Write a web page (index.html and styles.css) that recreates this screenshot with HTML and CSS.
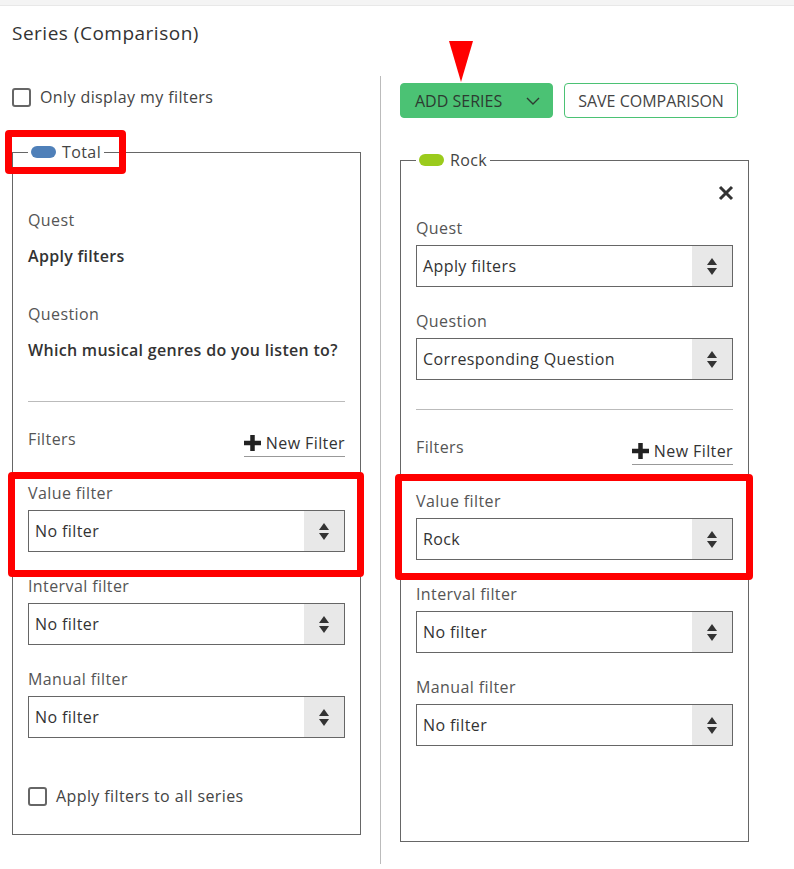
FILE: index.html
```html
<!DOCTYPE html>
<html lang="en">
<head>
  <meta charset="UTF-8">
  <title>Series (Comparison)</title>
  <link rel="stylesheet" href="styles.css">
</head>
<body>

  <div class="topbar"></div>

  <div class="page">
    <h2 class="title">Series (Comparison)</h2>

    <div class="columns">
      <div class="col col-left">
        <label class="check"><span class="box"></span>Only display my filters</label>

        <fieldset class="series">
          <legend><span class="pill pill-blue"></span>Total</legend>

          <div class="group first">
            <div class="label">Quest</div>
            <div class="value">Apply filters</div>
          </div>
          <div class="group wide">
            <div class="label">Question</div>
            <div class="value">Which musical genres do you listen to?</div>
          </div>

          <div class="divider divider-left"></div>

          <div class="filters-head">
            <span class="label">Filters</span>
            <span class="new-filter">
              <svg width="17" height="16" viewBox="0 0 17 16"><path d="M8.5 0v16M0 8h17" stroke="#222" stroke-width="4.5"/></svg>
              New Filter
            </span>
          </div>

          <div class="group filter">
            <div class="label">Value filter</div>
            <div class="select"><span>No filter</span><span class="arrows"><i class="up"></i><i class="down"></i></span></div>
          </div>
          <div class="group">
            <div class="label">Interval filter</div>
            <div class="select"><span>No filter</span><span class="arrows"><i class="up"></i><i class="down"></i></span></div>
          </div>
          <div class="group">
            <div class="label">Manual filter</div>
            <div class="select"><span>No filter</span><span class="arrows"><i class="up"></i><i class="down"></i></span></div>
          </div>

          <label class="check check-bottom"><span class="box"></span>Apply filters to all series</label>
        </fieldset>
      </div>

      <div class="col col-right">
        <div class="actions">
          <button class="btn btn-green">ADD SERIES
            <svg width="14" height="8" viewBox="0 0 14 8"><path d="M1 1l6 6 6-6" fill="none" stroke="#2d3b31" stroke-width="1.4"/></svg>
          </button>
          <button class="btn btn-outline">SAVE COMPARISON</button>
        </div>

        <fieldset class="series">
          <legend><span class="pill pill-green"></span>Rock</legend>
          <span class="close">
            <svg width="16" height="16" viewBox="0 0 16 16"><path d="M2 2l12 12M14 2L2 14" stroke="#333" stroke-width="3"/></svg>
          </span>

          <div class="group first">
            <div class="label">Quest</div>
            <div class="select"><span>Apply filters</span><span class="arrows"><i class="up"></i><i class="down"></i></span></div>
          </div>
          <div class="group">
            <div class="label">Question</div>
            <div class="select"><span>Corresponding Question</span><span class="arrows"><i class="up"></i><i class="down"></i></span></div>
          </div>

          <div class="divider"></div>

          <div class="filters-head">
            <span class="label">Filters</span>
            <span class="new-filter">
              <svg width="17" height="16" viewBox="0 0 17 16"><path d="M8.5 0v16M0 8h17" stroke="#222" stroke-width="4.5"/></svg>
              New Filter
            </span>
          </div>

          <div class="group filter">
            <div class="label">Value filter</div>
            <div class="select"><span>Rock</span><span class="arrows"><i class="up"></i><i class="down"></i></span></div>
          </div>
          <div class="group">
            <div class="label">Interval filter</div>
            <div class="select"><span>No filter</span><span class="arrows"><i class="up"></i><i class="down"></i></span></div>
          </div>
          <div class="group">
            <div class="label">Manual filter</div>
            <div class="select"><span>No filter</span><span class="arrows"><i class="up"></i><i class="down"></i></span></div>
          </div>

          <div class="check-space"></div>
        </fieldset>
      </div>
    </div>

    <!-- annotations drawn over the screenshot -->
    <div class="mark mark-legend"></div>
    <div class="mark mark-left"></div>
    <div class="mark mark-right"></div>
    <div class="arrow-down"></div>
  </div>

</body>
</html>
```

FILE: styles.css
```css
body {
  margin: 0;
  font-family: "Open Sans", Arial, sans-serif;
  font-size: 16px;
  letter-spacing: 0.4px;
  color: #333;
  background-color: #fff;
}
.topbar {
  height: 5px;
  background-color: #f4f4f4;
  border-bottom: 1px solid #e8e8e8;
}
.page {
  position: relative;
  padding: 15px 12px 0;
}
.title {
  margin: 0;
  font-size: 19px;
  font-weight: 500;
  letter-spacing: 0.5px;
  line-height: 24px;
  color: #333;
}
.columns {
  display: grid;
  grid-template-columns: 349px 39px 349px;
  margin-top: 31px;
}
.col-left {
  padding-top: 11px;
}
.col-right {
  grid-column: 3;
  position: relative;
  padding-top: 7px;
  padding-bottom: 22px;
}
.col-right::before {
  content: "";
  position: absolute;
  left: -20px;
  top: 0;
  bottom: 0;
  border-left: 1px solid #bbb;
}
.check {
  display: flex;
  align-items: center;
  gap: 9px;
  line-height: 20px;
  color: #444;
}
.box {
  width: 15px;
  height: 15px;
  border: 2px solid #666;
  border-radius: 3px;
  flex: none;
}
.series {
  margin: 35px 0 0;
  padding: 48px 15px 28px;
  border: 1px solid #666;
  min-width: 0;
  position: relative;
}
.col-right .series {
  margin-top: 32px;
}
.series legend {
  display: flex;
  align-items: center;
  gap: 6px;
  padding: 0 3px;
  line-height: 20px;
  color: #444;
}
.pill {
  width: 25px;
  height: 12px;
  border-radius: 6px;
}
.pill-blue {
  background-color: #4f80b9;
}
.pill-green {
  background-color: #9bcb1c;
}
.close {
  position: absolute;
  top: 15px;
  right: 14px;
  line-height: 0;
}
.label {
  line-height: 20px;
  color: #555;
}
.value {
  margin-top: 16px;
  line-height: 20px;
  font-weight: 600;
  letter-spacing: 0.3px;
  color: #333;
}
.group {
  margin-top: 24px;
}
.group.first {
  margin-top: 0;
}
.group.wide {
  margin-top: 38px;
}
.group .label {
  margin-bottom: 7px;
}
.group .value {
  margin-top: 16px;
}
.select {
  display: flex;
  height: 40px;
  border: 1px solid #666;
  line-height: 40px;
}
.select span:first-child {
  flex: 1;
  padding-left: 6px;
  color: #333;
}
.arrows {
  width: 40px;
  background-color: #e8e8e8;
  display: flex;
  flex-direction: column;
  align-items: center;
  justify-content: center;
  gap: 3px;
}
.arrows i {
  width: 0;
  height: 0;
  border-left: 5px solid transparent;
  border-right: 5px solid transparent;
}
.arrows .up {
  border-bottom: 7px solid #333;
}
.arrows .down {
  border-top: 7px solid #333;
}
.divider {
  border-top: 1px solid #bbb;
  margin-top: 29px;
}
.divider-left {
  margin-top: 41px;
}
.filters-head {
  display: flex;
  justify-content: space-between;
  align-items: flex-start;
  margin-top: 27px;
}
.new-filter {
  display: flex;
  align-items: center;
  gap: 5px;
  padding: 4px 0 3px;
  line-height: 20px;
  font-weight: 500;
  color: #333;
  border-bottom: 1px solid #999;
}
.group.filter {
  margin-top: 26px;
}
.check-bottom {
  margin-top: 48px;
}
.check-space {
  height: 67px;
}
.actions {
  display: flex;
  gap: 11px;
}
.btn {
  height: 35px;
  padding: 0 13px;
  font-family: "Open Sans", Arial, sans-serif;
  font-size: 16px;
  letter-spacing: 0;
  border-radius: 4px;
  display: flex;
  align-items: center;
  cursor: pointer;
}
.btn-green {
  background-color: #4bc274;
  border: 1px solid #4bc274;
  color: #2d3b31;
  gap: 24px;
  padding-left: 14px;
  padding-right: 12px;
}
.btn-outline {
  background-color: #fff;
  border: 1px solid #4bc274;
  color: #444;
}
.mark {
  position: absolute;
  border: 7px solid #f00;
  border-radius: 4px;
}
.mark-legend {
  left: 5px;
  top: 124px;
  width: 107px;
  height: 30px;
}
.mark-left {
  left: 8px;
  top: 466px;
  width: 342px;
  height: 91px;
}
.mark-right {
  left: 395px;
  top: 468px;
  width: 344px;
  height: 92px;
}
.arrow-down {
  position: absolute;
  left: 449px;
  top: 35px;
  width: 0;
  height: 0;
  border-left: 12px solid transparent;
  border-right: 12px solid transparent;
  border-top: 41px solid #f00;
}
```
